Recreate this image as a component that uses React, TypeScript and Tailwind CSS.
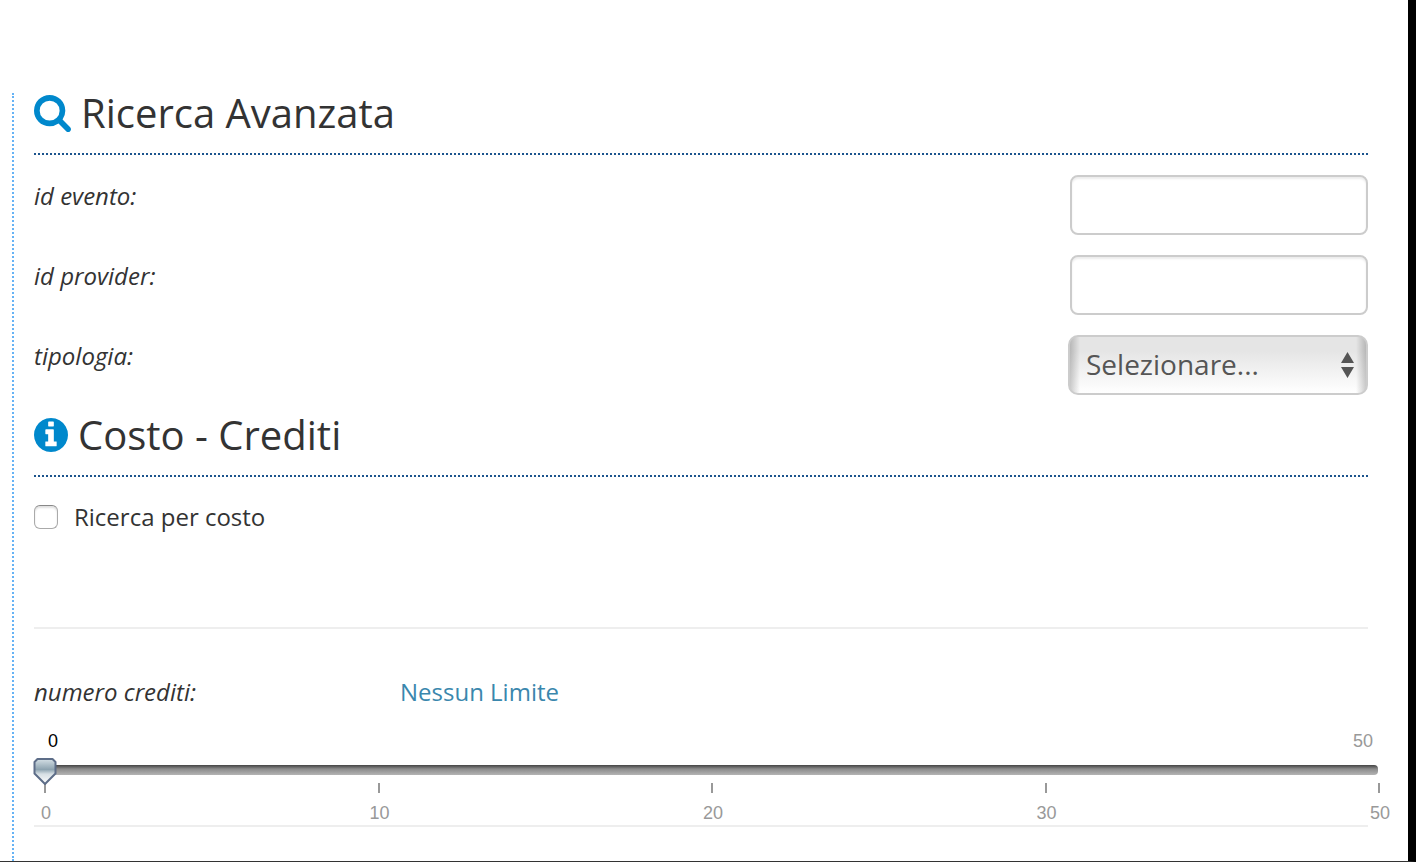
import { useState } from 'react'
import type { ReactNode } from 'react'

const scale = [0, 10, 20, 30, 50]

const inputStyles =
  'w-[298px] h-[60px] px-3 text-[28px] text-[#555555] bg-white border-2 border-[#cccccc] rounded-lg shadow-[inset_0_2px_2px_rgba(0,0,0,0.075)]'

function SearchIcon() {
  return (
    <svg className="w-[37px] h-[37px]" viewBox="64 128 1664 1664" fill="#0088cc" aria-hidden="true">
      <path d="M1216 832q0-185-131.5-316.5t-316.5-131.5-316.5 131.5-131.5 316.5 131.5 316.5 316.5 131.5 316.5-131.5 131.5-316.5zm512 832q0 52-38 90t-90 38q-54 0-90-38l-343-342q-179 124-399 124-143 0-273.5-55.5t-225-150-150-225-55.5-273.5 55.5-273.5 150-225 225-150 273.5-55.5 273.5 55.5 225 150 150 225 55.5 273.5q0 220-124 399l343 343q37 37 37 90z" />
    </svg>
  )
}

function InfoIcon() {
  return (
    <svg className="w-[34px] h-[34px]" viewBox="128 128 1536 1536" fill="#0088cc" aria-hidden="true">
      <path d="M1152 1376v-160q0-14-9-23t-23-9h-96v-512q0-14-9-23t-23-9h-320q-14 0-23 9t-9 23v160q0 14 9 23t23 9h96v320h-96q-14 0-23 9t-9 23v160q0 14 9 23t23 9h448q14 0 23-9t9-23zm-128-896v-160q0-14-9-23t-23-9h-192q-14 0-23 9t-9 23v160q0 14 9 23t23 9h192q14 0 23-9t9-23zm640 416q0 209-103 385.5t-279.5 279.5-385.5 103-385.5-103-279.5-279.5-103-385.5 103-385.5 279.5-279.5 385.5-103 385.5 103 279.5 279.5 103 385.5z" />
    </svg>
  )
}

function Title({ icon, children }: { icon: ReactNode; children: ReactNode }) {
  return (
    <h2 className="flex items-center gap-[10px] pb-5 mb-5 text-[40px] leading-10 border-b-2 border-dotted border-[#1c548d]">
      {icon}
      {children}
    </h2>
  )
}

function Field({ id, label, children }: { id: string; label: string; children: ReactNode }) {
  return (
    <div className="flex justify-between items-start mb-5">
      <label htmlFor={id} className="italic leading-[42px]">
        {label}
      </label>
      {children}
    </div>
  )
}

function CreditSlider() {
  const [position, setPosition] = useState(0)

  // the scale is not linear, each segment goes from one label to the next
  const segment = Math.min(Math.floor(position / 25), 3)
  const from = scale[segment]
  const to = scale[segment + 1]
  const credits = Math.round(from + ((to - from) * (position - segment * 25)) / 25)

  return (
    <div className="font-['Liberation_Sans',Arial,sans-serif] text-lg leading-5 text-[#999999]">
      <div className="flex justify-between pl-[14px] -mr-[5px]">
        <span className="text-black">{credits}</span>
        <span>50</span>
      </div>
      <div className="relative mt-[14px] -mr-[10px]">
        <div className="h-[10px] rounded bg-linear-to-b from-[#444444] via-[#8c8c8c] via-40% to-[#b4b4b4]" />
        <div className="absolute -top-2 left-0 right-6 h-7">
          <svg
            className="absolute top-0 -ml-px w-6 h-7"
            style={{ left: `${position}%` }}
            viewBox="0 0 24 28"
            aria-hidden="true"
          >
            <defs>
              <linearGradient id="thumb" x1="0" y1="0" x2="0" y2="1">
                <stop offset="0" stopColor="#d5e0e6" />
                <stop offset="0.42" stopColor="#8da3b0" />
                <stop offset="0.6" stopColor="#d6dfe4" />
                <stop offset="1" stopColor="#ffffff" />
              </linearGradient>
            </defs>
            <path
              d="M4.500 2H19.500L22.500 5V16.500L12 27L1.500 16.500V5Z"
              fill="url(#thumb)"
              stroke="#5d6d88"
              strokeWidth="2"
              strokeLinejoin="round"
            />
          </svg>
        </div>
        <input
          type="range"
          min={0}
          max={100}
          value={position}
          onChange={(e) => setPosition(Number(e.target.value))}
          aria-label="numero crediti"
          className="absolute -top-2 left-0 w-full h-7 opacity-0 cursor-pointer"
        />
      </div>
      <div className="flex justify-between mt-2 ml-[10px] -mr-3">
        {scale.map((value) => (
          <div key={value} className="flex flex-col items-center gap-[10px] w-0.5">
            <span className="w-0.5 h-[10px] bg-[#999999]" />
            <span className="pl-0.5">{value}</span>
          </div>
        ))}
      </div>
    </div>
  )
}

function App() {
  const [type, setType] = useState('')
  const [byCost, setByCost] = useState(false)

  return (
    <div className="flex flex-col min-h-screen pt-[93px] pl-3 pr-10 bg-white border-r-8 border-r-black border-b border-b-[#333333] font-['Open_Sans',sans-serif] text-2xl text-[#333333]">
      <form className="grow pl-5 border-l-2 border-dotted border-[#66b3f5]">
        <Title icon={<SearchIcon />}>Ricerca Avanzata</Title>
        <Field id="evento" label="id evento:">
          <input id="evento" type="text" className={inputStyles} />
        </Field>
        <Field id="provider" label="id provider:">
          <input id="provider" type="text" className={inputStyles} />
        </Field>
        <Field id="tipologia" label="tipologia:">
          <div className="relative">
            <select
              id="tipologia"
              value={type}
              onChange={(e) => setType(e.target.value)}
              className="appearance-none block w-[300px] h-[60px] pl-4 pr-10 pb-0.5 text-[28px] leading-10 text-[#555555] border-2 border-[#cccccc] rounded-[10px] bg-[linear-gradient(to_right,rgba(0,0,0,0.2),transparent_10px,transparent_calc(100%-10px),rgba(0,0,0,0.2)),linear-gradient(to_bottom,#e5e5e5_25%,#ffffff)]"
            >
              <option value="">Selezionare...</option>
              <option value="fad">FAD</option>
              <option value="res">RES</option>
            </select>
            <svg
              className="absolute top-[17px] right-[14px] w-[13px] h-[26px] pointer-events-none"
              viewBox="0 0 13 26"
              fill="#555555"
              aria-hidden="true"
            >
              <path d="M6.500 0L13 11H0ZM0 15H13L6.500 26Z" />
            </svg>
          </div>
        </Field>

        <Title icon={<InfoIcon />}>Costo - Crediti</Title>
        <label className="flex items-center gap-4 w-fit leading-10">
          <input
            type="checkbox"
            checked={byCost}
            onChange={(e) => setByCost(e.target.checked)}
            className="appearance-none size-6 bg-white checked:bg-[#0088cc] border border-[#aaaaaa] border-t-[#888888] rounded-md shadow-[inset_0_2px_2px_rgba(0,0,0,0.12)]"
          />
          Ricerca per costo
        </label>

        <hr className="mt-[90px] mb-[42px] border-t-2 border-[#eeeeee]" />

        <div className="flex mb-[18px] leading-[42px]">
          <span className="w-[366px] italic">numero crediti:</span>
          <span className="text-[#3a87ad]">Nessun Limite</span>
        </div>
        <CreditSlider />
        <hr className="mt-0.5 border-t-2 border-[#eeeeee]" />
      </form>
    </div>
  )
}

export default App
